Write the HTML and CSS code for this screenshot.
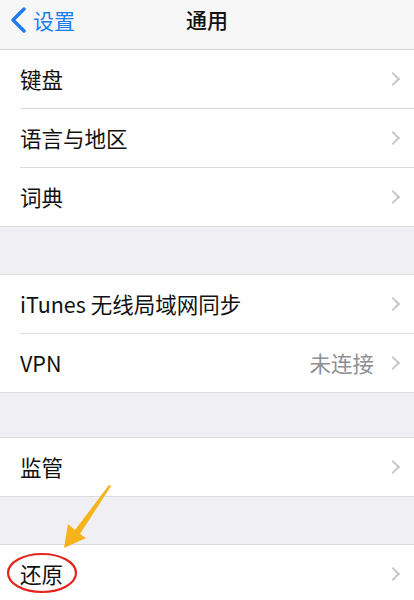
FILE: index.html
```html
<!DOCTYPE html>
<html lang="zh-CN">
<head>
    <meta charset="UTF-8">
    <meta name="viewport" content="width=device-width, initial-scale=1.0">
    <title>通用</title>
    <link rel="stylesheet" href="styles.css">
</head>
<body>

<header class="navbar">
    <a class="back">
        <svg class="back-icon" width="17" height="26" viewBox="0 0 17 26">
            <polyline points="14,2 3,13 14,24" fill="none" stroke="#1d7cf0" stroke-width="3.4" stroke-linecap="round" stroke-linejoin="round"/>
        </svg>
        <span>设置</span>
    </a>
    <h1>通用</h1>
</header>

<div class="group first">
    <div class="cell"><div class="cell-body"><span class="label">键盘</span><span class="chevron"></span></div></div>
    <div class="cell"><div class="cell-body"><span class="label">语言与地区</span><span class="chevron"></span></div></div>
    <div class="cell"><div class="cell-body"><span class="label">词典</span><span class="chevron"></span></div></div>
</div>

<div class="gap"></div>

<div class="group">
    <div class="cell"><div class="cell-body"><span class="label">iTunes 无线局域网同步</span><span class="chevron"></span></div></div>
    <div class="cell"><div class="cell-body"><span class="label">VPN</span><span class="detail">未连接</span><span class="chevron"></span></div></div>
</div>

<div class="gap short"></div>

<div class="group">
    <div class="cell"><div class="cell-body"><span class="label">监管</span><span class="chevron"></span></div></div>
</div>

<div class="gap"></div>

<div class="group">
    <div class="cell"><div class="cell-body"><span class="label">还原</span><span class="chevron"></span></div></div>
</div>

<!-- annotation drawn over the screenshot -->
<svg class="marks" width="414" height="600" viewBox="0 0 414 600">
    <polygon points="111,486 109,485 75,530 68,524 64,548 86,538 80,534" fill="#f6b31b"/>
    <ellipse cx="42" cy="573" rx="34" ry="19" fill="none" stroke="#e3241f" stroke-width="2.2"/>
</svg>

</body>
</html>
```

FILE: styles.css
```css
* {
    margin: 0;
    padding: 0;
    box-sizing: border-box;
}

body {
    font-family: "Noto Sans CJK SC", "Noto Sans", sans-serif;
    background-color: #efeff4;
    color: #111;
    width: 414px;
    height: 600px;
    overflow: hidden;
    position: relative;
}

.navbar {
    height: 50px;
    background-color: #f7f7f8;
    border-bottom: 1px solid #d4d4d8;
    display: flex;
    align-items: center;
    justify-content: center;
    position: relative;
}

.navbar h1 {
    font-size: 21px;
    font-weight: 500;
    line-height: 1;
    margin-top: -11px;
}

.back {
    position: absolute;
    left: 10px;
    top: 7px;
    display: flex;
    align-items: center;
    gap: 6px;
    color: #1d7cf0;
    font-size: 21px;
    line-height: 1;
}

.group {
    background-color: #fff;
    border-top: 1px solid #dcdce0;
    border-bottom: 1px solid #dcdce0;
}

.group.first {
    border-top: none;
}

.cell {
    padding-left: 20px;
}

.cell-body {
    height: 59px;
    display: flex;
    align-items: center;
    padding-right: 12px;
    border-bottom: 1px solid #dcdce0;
}

.cell:last-child .cell-body {
    border-bottom: none;
    height: 58px;
}

.label {
    flex: 1;
    font-size: 21.5px;
    line-height: 1;
}

.detail {
    font-size: 21.5px;
    line-height: 1;
    color: #8e8e93;
    margin-right: 14px;
}

.chevron {
    width: 10px;
    height: 10px;
    border-top: 2px solid #c7c7cc;
    border-right: 2px solid #c7c7cc;
    transform: rotate(45deg);
    margin-right: 4px;
}

.gap {
    height: 47px;
}

.gap.short {
    height: 44px;
}

.marks {
    position: absolute;
    left: 0;
    top: 0;
    pointer-events: none;
}
```
